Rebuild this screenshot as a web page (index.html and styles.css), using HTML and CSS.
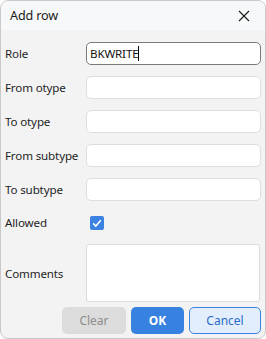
FILE: index.html
```html
<!DOCTYPE html>
<html lang="en">
<head>
  <meta charset="UTF-8">
  <meta name="viewport" content="width=device-width, initial-scale=1.0">
  <title>Add row</title>
  <link rel="stylesheet" href="styles.css">
</head>
<body>
  <div class="dialog">
    <div class="titlebar">
      <span class="title">Add row</span>
      <svg class="close" width="12" height="12" viewBox="0 0 12 12"><path d="M1 1 L11 11 M11 1 L1 11" stroke="#1b1b1b" stroke-width="1.1" fill="none"/></svg>
    </div>
    <div class="form">
      <label>Role</label>
      <div class="field focus">BKWRITE<span class="caret"></span></div>
      <label>From otype</label>
      <div class="field"></div>
      <label>To otype</label>
      <div class="field"></div>
      <label>From subtype</label>
      <div class="field"></div>
      <label>To subtype</label>
      <div class="field"></div>
      <label>Allowed</label>
      <div class="check-cell">
        <span class="checkbox"><svg width="14" height="14" viewBox="0 0 14 14"><path d="M3.2 7.4 L5.8 10 L10.8 4.2" stroke="#fff" stroke-width="1.6" fill="none"/></svg></span>
      </div>
      <label>Comments</label>
      <div class="area"></div>
    </div>
    <div class="buttons">
      <button class="btn clear" disabled>Clear</button>
      <button class="btn ok">OK</button>
      <button class="btn cancel">Cancel</button>
    </div>
  </div>
</body>
</html>
```

FILE: styles.css
```css
body { margin: 0; font-family: "Segoe UI", "Noto Sans", sans-serif; font-size: 11.6px; letter-spacing: -0.15px; color: #1f1f1f; background: #fff; }
.dialog { width: 266px; height: 339px; box-sizing: border-box; border: 1px solid #c9c9c9; border-radius: 8px; background: #f3f3f3; overflow: hidden; display: flex; flex-direction: column; }
.titlebar { height: 29px; flex: none; display: flex; align-items: center; justify-content: space-between; padding: 0 15px 0 9px; background: #f7f8f9; }
.title { font-size: 12.6px; color: #1b1b1b; }
.form { display: grid; grid-template-columns: 81px 1fr; grid-template-rows: repeat(5, 23px) 21px 58px; row-gap: 11px; padding: 12px 4px 0 4px; }
.form label { display: flex; align-items: center; }
.field { box-sizing: border-box; height: 23px; background: #fff; border: 1px solid #dedede; border-radius: 5px; padding: 0 3px; display: flex; align-items: center; color: #111; }
.field.focus { border-color: #7a7a7a; }
.caret { display: inline-block; width: 1px; height: 15px; background: #000; }
.check-cell { display: flex; align-items: center; padding-left: 4px; }
.checkbox { width: 14px; height: 14px; border-radius: 2px; background: #3b82e2; display: block; }
.checkbox svg { display: block; }
.area { box-sizing: border-box; background: #fff; border: 1px solid #dcdcdc; border-radius: 3px; margin-right: 1px; }
.buttons { display: flex; justify-content: flex-end; gap: 5px; padding: 5px 4px 0 0; }
.btn { height: 27px; box-sizing: border-box; border-radius: 5px; font-family: inherit; font-size: 12px; border: 1px solid transparent; padding: 0; }
.clear { width: 64px; background: #dcdcdc; color: #8d8d8d; }
.ok { width: 53px; background: #3781e0; color: #fff; font-weight: bold; }
.cancel { width: 72px; background: #e3eefc; border-color: #3b82e2; color: #2c6cc9; }
```
